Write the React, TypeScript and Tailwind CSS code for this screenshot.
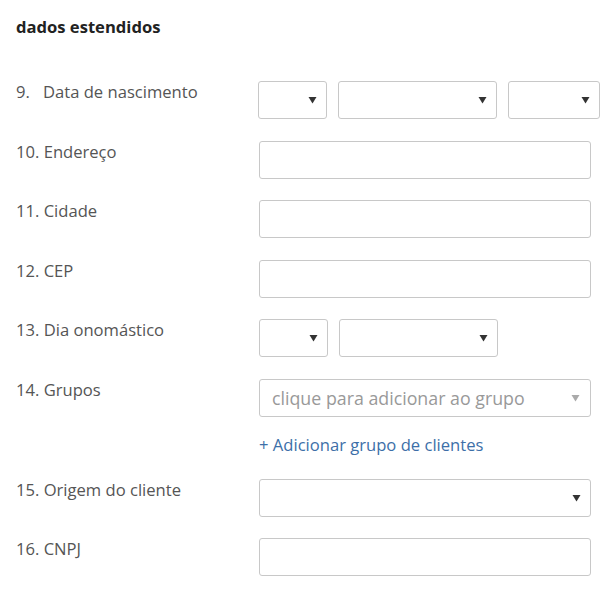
import React from "react";

const Arrow = ({ light }: { light?: boolean }) => (
  <svg width="9" height="8" viewBox="0 0 9 8" className="shrink-0">
    <path d="M0.5 1 L8.5 1 L4.5 7.5 Z" fill={light ? "#aaaaaa" : "#333333"} />
  </svg>
);

const Select = ({ w, light }: { w: string; light?: boolean }) => (
  <div className={`${w} h-[38px] border border-[#c8c8c8] rounded-[3px] bg-white flex items-center justify-end pr-[9px]`}>
    <Arrow light={light} />
  </div>
);

const Input = () => <div className="w-[332px] h-[38px] border border-[#c8c8c8] rounded-[3px] bg-white" />;

const Row = ({ label, num, children }: { label: string; num: string; children: React.ReactNode }) => (
  <div className="flex items-start h-[38px]">
    <div className="w-[243px] -mt-[1px] text-[16.6px] leading-[24px] text-[#555555] flex">
      {num === "9." ? (
        <>
          <span className="w-[27px]">{num}</span>
          <span>{label}</span>
        </>
      ) : (
        <span>
          {num} {label}
        </span>
      )}
    </div>
    {children}
  </div>
);

export default function App() {
  return (
    <div className="bg-white w-[600px] h-[600px] pl-[16px] pt-[15px]" style={{ fontFamily: '"Open Sans", sans-serif' }}>
      <div className="text-[16.6px] leading-[24px] font-bold text-[#222222]">dados estendidos</div>
      <div className="mt-[42px] flex flex-col gap-[21.6px]">
        <Row num="9." label="Data de nascimento">
          <div className="flex gap-[11px]">
            <Select w="w-[69px]" />
            <Select w="w-[159px]" />
            <Select w="w-[92px]" />
          </div>
        </Row>
        <Row num="10." label="Endereço">
          <Input />
        </Row>
        <Row num="11." label="Cidade">
          <Input />
        </Row>
        <Row num="12." label="CEP">
          <Input />
        </Row>
        <Row num="13." label="Dia onomástico">
          <div className="flex gap-[11px]">
            <Select w="w-[69px]" />
            <Select w="w-[159px]" />
          </div>
        </Row>
        <div className="flex flex-col">
          <Row num="14." label="Grupos">
            <div className="w-[332px] h-[38px] border border-[#c8c8c8] rounded-[3px] bg-white flex items-center justify-between pl-[12px] pr-[10px]">
              <span className="text-[17.8px] text-[#999999] leading-[24px]">clique para adicionar ao grupo</span>
              <Arrow light />
            </div>
          </Row>
          <div className="pl-[243px] mt-[16px] text-[16.6px] leading-[24px] text-[#3d6fa8]">+ Adicionar grupo de clientes</div>
        </div>
        <Row num="15." label="Origem do cliente">
          <Select w="w-[332px]" />
        </Row>
        <Row num="16." label="CNPJ">
          <Input />
        </Row>
      </div>
    </div>
  );
}
